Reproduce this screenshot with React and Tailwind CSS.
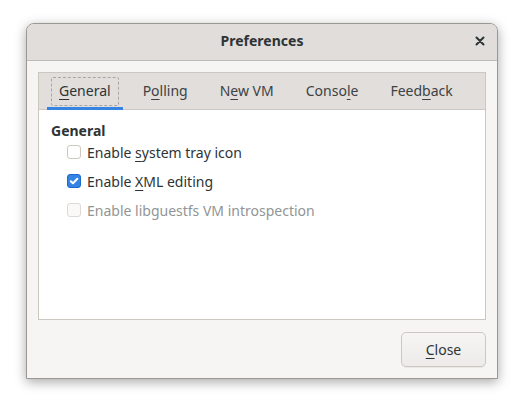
import React from 'react';

const font = { fontFamily: '"Noto Sans", "DejaVu Sans", sans-serif' };

const Mn = ({ children }) => <span className="underline underline-offset-[3px] decoration-1">{children}</span>;

const tabs = [
  { id: 'general', label: <><Mn>G</Mn>eneral</> },
  { id: 'polling', label: <>P<Mn>o</Mn>lling</> },
  { id: 'newvm', label: <>N<Mn>e</Mn>w VM</> },
  { id: 'console', label: <>Conso<Mn>l</Mn>e</> },
  { id: 'feedback', label: <>Feed<Mn>b</Mn>ack</> },
];

const Check = ({ checked, disabled, children }) => (
  <label className={`flex items-center gap-[6px] h-[20px] ${disabled ? 'text-[#929595]' : 'text-[#2e3436]'}`}>
    {checked ? (
      <span className="w-[14px] h-[14px] rounded-[3px] bg-[#3584e4] border border-[#1b6acb] flex items-center justify-center">
        <svg width="10" height="10" viewBox="0 0 10 10">
          <path d="M1.8 5.2 L4 7.3 L8.3 2.8" fill="none" stroke="white" strokeWidth="2" strokeLinecap="round" strokeLinejoin="round" />
        </svg>
      </span>
    ) : (
      <span className={`w-[14px] h-[14px] rounded-[3px] border ${disabled ? 'border-[#ddd9d5] bg-[#faf9f8]' : 'border-[#cdc7c2] bg-white'}`} />
    )}
    <span>{children}</span>
  </label>
);

export default function App() {
  return (
    <div className="w-[525px] h-[408px] bg-white pt-[23px] pl-[26px] text-[14px]" style={font}>
      <div className="w-[472px] h-[356px] flex flex-col rounded-t-[8px] border border-[#9b9894] bg-[#f6f5f4] shadow-[0_3px_12px_rgba(0,0,0,0.35)] overflow-hidden">
        {/* header bar */}
        <div className="h-[37px] flex items-center relative bg-[#e0ddda] border-b border-[#c0bbb7]">
          <div className="flex-1 text-center font-bold text-[14px] text-[#2e3436] -mt-[3px]">Preferences</div>
          <button className="absolute right-[11px] top-[11px] w-[12px] h-[12px] flex items-center justify-center">
            <svg width="10" height="10" viewBox="0 0 10 10">
              <path d="M1.5 1.5 L8.5 8.5 M8.5 1.5 L1.5 8.5" stroke="#2e3436" strokeWidth="2" strokeLinecap="round" />
            </svg>
          </button>
        </div>

        {/* body */}
        <div className="flex-1 flex flex-col px-[11px] pt-[11px]">
          <div className="h-[248px] flex flex-col border border-[#cdc7c2]">
            <div className="h-[37px] flex items-stretch gap-[8px] px-[8px] bg-[#e1dedb] border-b border-[#cdc7c2]">
              {tabs.map((t, i) => (
                <div key={t.id} className={`relative flex items-center px-[12px] -mt-[1px] ${i === 0 ? 'text-[#2e3436]' : 'text-[#3d4244]'}`}>
                  {i === 0 && (
                    <span className="absolute left-[4px] right-[4px] top-[5px] bottom-[3px] border border-dashed border-[#a8a6a3] rounded-[2px]" />
                  )}
                  <span className="relative">{t.label}</span>
                  {i === 0 && <span className="absolute left-0 right-0 bottom-[-1px] h-[3px] bg-[#3584e4]" />}
                </div>
              ))}
            </div>
            <div className="flex-1 bg-white px-[12px] pt-[11px]">
              <div className="font-bold text-[#2e3436] h-[20px] leading-[20px]">General</div>
              <div className="pl-[16px] flex flex-col gap-[9px] mt-[1px]">
                <Check>Enable <Mn>s</Mn>ystem tray icon</Check>
                <Check checked>Enable <Mn>X</Mn>ML editing</Check>
                <Check disabled>Enable libguestfs VM introspection</Check>
              </div>
            </div>
          </div>
          <div className="flex justify-end mt-[12px]">
            <button className="w-[85px] h-[35px] rounded-[5px] border border-[#cdc7c2] bg-gradient-to-b from-[#f6f5f4] to-[#edebe9] shadow-[0_1px_0_rgba(0,0,0,0.05)] text-[#2e3436]">
              <Mn>C</Mn>lose
            </button>
          </div>
        </div>
      </div>
    </div>
  );
}
